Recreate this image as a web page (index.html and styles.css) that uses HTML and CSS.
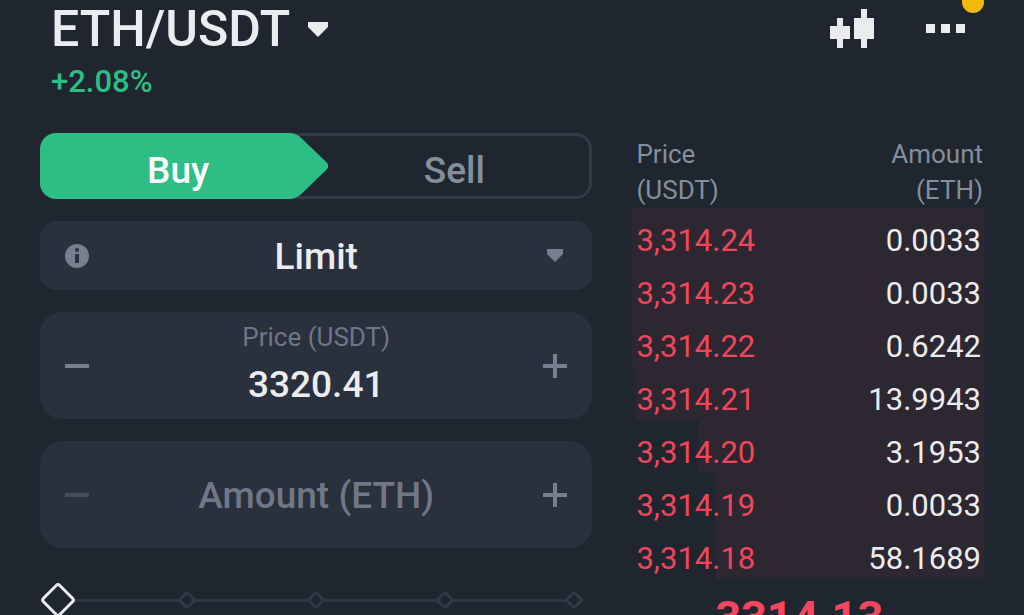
FILE: index.html
```html
<!DOCTYPE html>
<html lang="en">
<head>
  <meta charset="UTF-8" />
  <meta name="viewport" content="width=device-width, initial-scale=1.0"/>
  <title>ETH/USDT</title>
  <link rel="stylesheet" href="styles.css">
</head>
<body>

  <!-- Pair header -->
  <header class="topbar">
    <div class="pair">
      <button class="pair-name" type="button">
        ETH/USDT
        <svg width="20" height="15" viewBox="0 0 20 15" aria-hidden="true"><path d="M0 0h20v5l-10 10L0 5z" fill="currentColor"/></svg>
      </button>
      <div class="change">+2.08%</div>
    </div>
    <div class="tools">
      <button class="icon-btn" type="button" aria-label="Chart">
        <svg width="44" height="39" viewBox="0 0 44 39" aria-hidden="true"><path d="M7 9h6v8h7v13h-7v9H7v-9H0V17h7zM31 0h6v9h7v21h-7v9h-6v-9h-7V9h7z" fill="currentColor"/></svg>
      </button>
      <button class="icon-btn more" type="button" aria-label="More">
        <svg width="40" height="9" viewBox="0 0 40 9" aria-hidden="true"><path d="M0 0h9v9H0zM15 0h9v9h-9zM30 0h9v9h-9z" fill="currentColor"/></svg>
        <span class="badge"></span>
      </button>
    </div>
  </header>

  <main class="trade">

    <!-- Order form -->
    <form class="order">
      <div class="side">
        <button class="side-btn buy" type="button">
          <svg class="side-shape" viewBox="0 0 288 66" preserveAspectRatio="none" aria-hidden="true"><path d="M16 0H249Q255 0 260 4L286 29Q290 33 286 37L260 62Q255 66 249 66H16A16 16 0 0 1 0 50V16A16 16 0 0 1 16 0z" fill="#2ebd85"/></svg>
          <span class="side-text">Buy</span>
        </button>
        <button class="side-btn" type="button">Sell</button>
      </div>

      <div class="field type">
        <button class="icon-btn" type="button" aria-label="About order types">
          <svg width="24" height="24" viewBox="0 0 24 24" aria-hidden="true">
            <circle cx="12" cy="12" r="12" fill="currentColor"/>
            <circle cx="12" cy="6" r="2" fill="#2a303c"/>
            <path d="M10 10h4v9h-4z" fill="#2a303c"/>
          </svg>
        </button>
        <select class="value" aria-label="Order type">
          <option>Limit</option>
          <option>Market</option>
        </select>
        <svg class="caret" width="16" height="13" viewBox="0 0 16 13" aria-hidden="true"><path d="M0 0h16v5l-8 8L0 5z" fill="currentColor"/></svg>
      </div>

      <div class="field stepper">
        <button class="icon-btn" type="button" aria-label="Decrease price">
          <svg width="24" height="24" viewBox="0 0 24 24" aria-hidden="true"><path d="M0 10h24v4H0z" fill="currentColor"/></svg>
        </button>
        <div class="entry">
          <label for="price">Price (USDT)</label>
          <input class="value" id="price" type="text" inputmode="decimal" value="3320.41">
        </div>
        <button class="icon-btn" type="button" aria-label="Increase price">
          <svg width="24" height="24" viewBox="0 0 24 24" aria-hidden="true"><path d="M10 0h4v10h10v4H14v10h-4V14H0v-4h10z" fill="currentColor"/></svg>
        </button>
      </div>

      <div class="field stepper">
        <button class="icon-btn" type="button" aria-label="Decrease amount" disabled>
          <svg width="24" height="24" viewBox="0 0 24 24" aria-hidden="true"><path d="M0 10h24v4H0z" fill="currentColor"/></svg>
        </button>
        <div class="entry">
          <input class="value" type="text" inputmode="decimal" placeholder="Amount (ETH)" aria-label="Amount (ETH)">
        </div>
        <button class="icon-btn" type="button" aria-label="Increase amount">
          <svg width="24" height="24" viewBox="0 0 24 24" aria-hidden="true"><path d="M10 0h4v10h10v4H14v10h-4V14H0v-4h10z" fill="currentColor"/></svg>
        </button>
      </div>

      <div class="percent">
        <span class="stop"></span>
        <span class="stop"></span>
        <span class="stop"></span>
        <span class="stop"></span>
        <span class="stop"></span>
        <input class="range" type="range" min="0" max="100" step="25" value="0" aria-label="Percent of balance">
      </div>
    </form>

    <!-- Order book -->
    <section class="book">
      <table class="asks">
        <thead>
          <tr><th>Price<br>(USDT)</th><th>Amount<br>(ETH)</th></tr>
        </thead>
        <tbody>
          <tr style="--depth: 100%"><td>3,314.24</td><td>0.0033</td></tr>
          <tr style="--depth: 100%"><td>3,314.23</td><td>0.0033</td></tr>
          <tr style="--depth: 100%"><td>3,314.22</td><td>0.6242</td></tr>
          <tr style="--depth: 99%"><td>3,314.21</td><td>13.9943</td></tr>
          <tr style="--depth: 81%"><td>3,314.20</td><td>3.1953</td></tr>
          <tr style="--depth: 76%"><td>3,314.19</td><td>0.0033</td></tr>
          <tr style="--depth: 76%"><td>3,314.18</td><td>58.1689</td></tr>
        </tbody>
      </table>
      <div class="last-price">3314.13</div>
    </section>

  </main>

</body>
</html>
```
FILE: styles.css
```css
* {
  box-sizing: border-box;
}

body {
  margin: 0;
  height: 100vh;
  overflow: hidden;
  background: #202630;
  font-family: Roboto, "Liberation Sans", sans-serif;
  color: #eaecef;
}

button,
input,
select {
  margin: 0;
  padding: 0;
  border: 0;
  background: none;
  font-family: inherit;
  color: inherit;
  outline: none;
}

svg {
  display: block;
}

/* Header */
.topbar {
  display: flex;
  justify-content: space-between;
  padding: 0 58px 31px 51px;
}

.pair-name {
  display: flex;
  align-items: center;
  gap: 18px;
  font-size: 50px;
  font-weight: 500;
  line-height: 58px;
}

.change {
  padding-top: 4px;
  font-size: 31px;
  font-weight: 500;
  line-height: 40px;
  color: #2ebd85;
}

.tools {
  display: flex;
  align-items: center;
  gap: 52px;
  height: 57px;
}

.icon-btn {
  flex: none;
  color: #767f90;
}

.icon-btn:disabled {
  color: #464d5a;
}

.tools .icon-btn {
  color: #eaecef;
}

.more {
  position: relative;
}

.badge {
  position: absolute;
  right: -18px;
  bottom: 20px;
  width: 22px;
  height: 22px;
  border-radius: 50%;
  background: #f0b90b;
}

/* Layout */
.trade {
  display: grid;
  grid-template-columns: 11fr 7fr;
  gap: 40px;
  padding: 0 40px;
}

.order {
  display: flex;
  flex-direction: column;
  gap: 22px;
}

/* Buy / sell switch */
.side {
  display: flex;
  height: 66px;
  border-radius: 16px;
  box-shadow: inset 0 0 0 3px #333a45;
}

.side-btn {
  position: relative;
  flex: 1;
  padding-top: 8px;
  font-size: 37px;
  font-weight: 500;
  color: #848e9c;
}

.buy {
  color: #fff;
}

.side-shape {
  position: absolute;
  top: 0;
  left: 0;
  width: calc(100% + 12px);
  height: 100%;
}

.side-text {
  position: relative;
}

/* Form fields */
.field {
  display: flex;
  align-items: center;
  padding: 0 25px;
  border-radius: 16px;
  background: #2a303c;
}

.type {
  height: 69px;
}

.stepper {
  height: 107px;
  border-radius: 22px;
}

.entry {
  display: flex;
  flex: 1;
  flex-direction: column;
  min-width: 0;
  text-align: center;
}

.entry label {
  font-size: 26px;
  line-height: 36px;
  color: #6f7789;
}

.value {
  flex: 1;
  width: 100%;
  min-width: 0;
  padding-top: 2px;
  font-size: 37px;
  font-weight: 500;
  line-height: 56px;
  text-align: center;
}

select.value {
  appearance: none;
  text-align-last: center;
}

.value::placeholder {
  color: #6f7789;
}

.caret {
  flex: none;
  margin: 0 4px;
  color: #767f90;
}

/* Percent slider */
.percent {
  position: relative;
  display: flex;
  justify-content: space-between;
  align-items: center;
  height: 36px;
  margin-top: 12px;
  padding: 0 11px;
  background: linear-gradient(#2f3641, #2f3641) center / calc(100% - 36px) 3px no-repeat;
}

.stop {
  width: 14px;
  height: 14px;
  border: 3px solid #333a45;
  border-radius: 3px;
  background: #202630;
  transform: rotate(45deg);
}

.range {
  position: absolute;
  top: 0;
  left: 5px;
  width: calc(100% - 10px);
  height: 36px;
  appearance: none;
}

.range::-webkit-slider-thumb {
  width: 26px;
  height: 26px;
  border: 3px solid #eaecef;
  border-radius: 4px;
  background: #202630;
  appearance: none;
  transform: rotate(45deg);
}

/* Order book */
.book {
  padding-top: 3px;
}

.asks {
  width: 100%;
  border-collapse: collapse;
}

.asks th {
  padding: 0 1px 0 4px;
  font-size: 26px;
  font-weight: 400;
  line-height: 36px;
  text-align: left;
  color: #848e9c;
}

.asks td {
  padding: 12px 3px 0 4px;
  font-size: 31px;
  line-height: 41px;
  color: #f0465c;
}

.asks tbody tr {
  background: linear-gradient(#2d2731, #2d2731) right / var(--depth) 100% no-repeat;
}

.asks th:last-child,
.asks td:last-child {
  text-align: right;
}

.asks td:last-child {
  color: #eaecef;
}

.last-price {
  padding-top: 12px;
  padding-right: 18px;
  font-size: 45px;
  font-weight: 700;
  line-height: 54px;
  text-align: center;
  color: #f6465d;
}
```
